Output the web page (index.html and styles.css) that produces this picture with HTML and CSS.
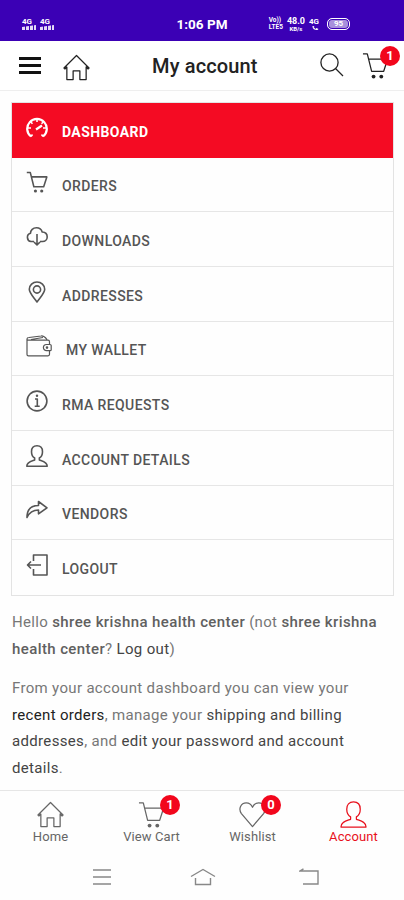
FILE: index.html
```html
<!DOCTYPE html>
<html lang="en">

<head>
    <meta charset="UTF-8">
    <meta name="viewport" content="width=device-width, initial-scale=1.0">
    <title>My account</title>
    <link rel="stylesheet" href="styles.css">
</head>

<body>
    <svg class="sprite" xmlns="http://www.w3.org/2000/svg">
        <symbol id="home" viewBox="0 0 28 28">
            <path d="M1 14.500 14 1.500l13 13-1 1-2-2v13h-6.500v-9h-7v9H4v-13l-2 2z" />
        </symbol>
        <symbol id="cart" viewBox="0 0 28 28">
            <path d="M1 2h4.500l4.500 18h12.500l4-12.500H7" />
            <circle class="dot" cx="12" cy="25.500" r="2" />
            <circle class="dot" cx="20" cy="25.500" r="2" />
        </symbol>
        <symbol id="user" viewBox="0 0 28 28">
            <path d="M14 1C9.500 1 7 4 7 8.500c0 3.500 1.500 6.500 4 8v2.500C7 20.500 1 21.500 1 27h26c0-5.500-6-6.500-10-8v-2.500c2.500-1.500 4-4.500 4-8C21 4 18.500 1 14 1z" />
        </symbol>
    </svg>

    <!-- Status bar -->
    <div class="status-bar">
        <div class="signals">
            <div class="signal"><span>4G</span><i class="bars"></i></div>
            <div class="signal"><span>4G</span><i class="bars"></i></div>
        </div>
        <div class="clock">1:06 PM</div>
        <div class="indicators">
            <div class="tiny"><span>Vo))</span><span>LTE5</span></div>
            <div class="tiny speed"><span>48.0</span><span>KB/s</span></div>
            <div class="tiny call"><span>4G</span>
                <svg viewBox="0 0 8 6"><path d="M1 1c0 3 2 4 5 4l1-1-2-1-1 1-2-2 1-1z" /></svg>
            </div>
            <div class="battery">95</div>
        </div>
    </div>

    <header class="top-bar">
        <div class="menu-button"><span></span><span></span><span></span></div>
        <svg class="icon top-home"><use href="#home" /></svg>
        <h1>My account</h1>
        <svg class="icon top-search" viewBox="0 0 24 24">
            <circle cx="9.500" cy="9.500" r="8.600" />
            <path d="M15.500 15.500 23 23" />
        </svg>
        <div class="icon-badge top-cart">
            <svg class="icon"><use href="#cart" /></svg>
            <span class="badge">1</span>
        </div>
    </header>

    <main>
        <ul class="account-menu">
            <li class="active">
                <svg class="icon" viewBox="0 0 22 22">
                    <path class="thick" d="M5 19.500a9.800 9.800 0 1 1 12 0" />
                    <path d="M11 2v3M4.500 4.800l2 2M17.500 4.800l-2 2M2 11h3M17 11h3M5 19.500l1.500-2M17 19.500l-1.500-2" />
                    <path class="thick" d="m10 12.500 6-4" />
                </svg>
                <span>DASHBOARD</span>
            </li>
            <li><svg class="icon orders"><use href="#cart" /></svg><span>ORDERS</span></li>
            <li>
                <svg class="icon" viewBox="0 0 22 22">
                    <path d="M8 15.500H5a4.200 4.200 0 0 1-.5-8.200C4.500 4 7 1.800 10.500 1.800c3 0 5 1.700 5.700 4.200 3 .2 5 2.200 5 4.900 0 2.600-2 4.600-4.700 4.600H14M11 8v11M8 16l3 3 3-3" />
                </svg>
                <span>DOWNLOADS</span>
            </li>
            <li>
                <svg class="icon" viewBox="0 0 22 22">
                    <path d="M11 21C7 15.500 3.300 12 3.300 8.300a7.700 7.300 0 0 1 15.400 0C18.700 12 15 15.500 11 21z" />
                    <circle cx="11" cy="8.500" r="3.600" />
                </svg>
                <span>ADDRESSES</span>
            </li>
            <li>
                <svg class="icon wallet" viewBox="0 0 26 22">
                    <path d="M23.500 9.300V6.700c0-1-.5-1.500-1.500-1.500H2.500C1.500 5.200 1 4.600 1 4v15.500c0 .8.600 1.300 1.500 1.300H22c1 0 1.500-.5 1.500-1.500v-3.500M1 4c0-1 .8-1.500 2-1.500L15 1c2-.3 4 1 6 3.500M5 4.500l12-2" />
                    <path d="M24 9.500h-3.500a3.100 3.100 0 0 0 0 6.200H24c.7 0 1.200-.4 1.200-1v-4.200c0-.6-.5-1-1.200-1z" />
                    <circle cx="21" cy="12.600" r=".7" />
                </svg>
                <span>MY WALLET</span>
            </li>
            <li>
                <svg class="icon" viewBox="0 0 22 22">
                    <circle cx="11" cy="11" r="9.900" />
                    <path d="M9 9h2.300v7M8.700 16.300h5" />
                    <circle class="dot" cx="11" cy="5.800" r="1.200" />
                </svg>
                <span>RMA REQUESTS</span>
            </li>
            <li><svg class="icon person"><use href="#user" /></svg><span>ACCOUNT DETAILS</span></li>
            <li>
                <svg class="icon" viewBox="0 0 22 22">
                    <path d="M1 18.500C1 11 5 6.500 12.500 6.500V2.500l8.500 6.300-8.500 6V11C7 11 3.500 13 1 18.500z" />
                </svg>
                <span>VENDORS</span>
            </li>
            <li>
                <svg class="icon" viewBox="0 0 22 22">
                    <path d="M7.500 7V1H21v20H7.500v-6M15 11H1.500M5 7.500 1.500 11 5 14.500" />
                </svg>
                <span>LOGOUT</span>
            </li>
        </ul>

        <div class="account-content">
            <p>Hello <strong>shree krishna health center</strong> (not <strong>shree krishna<br>health center</strong>? <a>Log out</a>)</p>
            <p>From your account dashboard you can view your<br><a class="dark">recent orders</a>, manage your <a>shipping and billing<br>addresses</a>, and <a>edit your password and account<br>details</a>.</p>
        </div>
    </main>

    <nav class="bottom-bar">
        <div class="tab">
            <svg class="icon"><use href="#home" /></svg>
            <span>Home</span>
        </div>
        <div class="tab">
            <div class="icon-badge">
                <svg class="icon"><use href="#cart" /></svg>
                <span class="badge">1</span>
            </div>
            <span>View Cart</span>
        </div>
        <div class="tab">
            <div class="icon-badge">
                <svg class="icon" viewBox="0 0 28 28">
                    <path d="M14 26.500 2.500 13C-1 8 2 2 7.500 2c3 0 5.300 1.700 6.500 4.500C15.200 3.700 17.500 2 20.500 2 26 2 29 8 25.500 13z" />
                </svg>
                <span class="badge">0</span>
            </div>
            <span>Wishlist</span>
        </div>
        <div class="tab current">
            <svg class="icon"><use href="#user" /></svg>
            <span>Account</span>
        </div>
    </nav>

    <!-- System navigation -->
    <div class="system-bar">
        <svg viewBox="0 0 20 18"><path d="M1 2h18M1 9h18M1 16h18" /></svg>
        <svg class="sys-home" viewBox="0 0 26 18"><path d="M1 8.500 13 1.500l12 7M5.500 10v6.500h15V10" /></svg>
        <svg viewBox="0 0 20 18"><path d="M4.500 .8 1 3h18v13H4" /></svg>
    </div>
</body>

</html>
```

FILE: styles.css
```css
* {
    box-sizing: border-box;
}

body {
    margin: 0;
    height: 900px;
    display: flex;
    flex-direction: column;
    overflow: hidden;
    background-color: #fefefe;
    color: #777;
    font-family: Roboto, "Liberation Sans", sans-serif;
}

.sprite {
    display: none;
}

.icon {
    display: block;
    flex: none;
    width: 27px;
    height: 27px;
    fill: none;
    stroke: currentColor;
    stroke-width: 1.3;
    stroke-linejoin: round;
}

.dot {
    fill: currentColor;
    stroke: none;
}

/* Status bar */
.status-bar {
    flex: none;
    display: grid;
    grid-template-columns: 1fr auto 1fr;
    align-items: center;
    height: 41px;
    padding: 7px 54px 0 22px;
    background-color: #3b00b5;
    color: #fff;
}

.signals,
.indicators {
    display: flex;
    align-items: center;
}

.signals {
    gap: 4px;
}

.signal {
    width: 14px;
    font-size: 8px;
    font-weight: 700;
    line-height: 7px;
}

.signal span {
    display: block;
}

.bars {
    display: block;
    height: 5px;
    background: repeating-linear-gradient(90deg, #e4daf8 0 3px, transparent 3px 4px);
    clip-path: polygon(0 40%, 100% 0, 100% 100%, 0 100%);
}

.clock {
    margin-left: 32px;
    font-size: 13.500px;
    font-weight: 700;
}

.indicators {
    justify-content: flex-end;
    gap: 4px;
}

.tiny {
    font-size: 6.500px;
    font-weight: 700;
    line-height: 7px;
}

.tiny span {
    display: block;
}

.tiny svg {
    display: block;
    width: 9px;
    height: 6px;
    margin-left: 2px;
    fill: #fff;
}

.speed span:first-child {
    font-size: 9px;
    line-height: 8px;
}

.speed span:last-child {
    font-size: 6px;
    text-align: center;
}

.call {
    width: 14px;
    font-size: 8px;
}

.battery {
    width: 23px;
    height: 12px;
    border: 1px solid #fff;
    border-radius: 5px;
    box-shadow: inset 0 0 0 1px #3b00b5;
    background-color: #a891dc;
    font-size: 8px;
    font-weight: 700;
    line-height: 10px;
    text-align: center;
}

/* Header */
.top-bar {
    flex: none;
    display: flex;
    align-items: center;
    height: 50px;
    padding: 0 15px 0 19px;
    border-bottom: 1px solid #eee;
    background-color: #fff;
    color: #222;
}

.menu-button {
    display: flex;
    flex-direction: column;
    gap: 4px;
    width: 22px;
}

.menu-button span {
    height: 3px;
    background-color: #111;
}

.top-home {
    margin-left: 22px;
    margin-top: 3px;
}

.top-bar h1 {
    flex: 1;
    margin: 0 0 0 62px;
    font-size: 20px;
    font-weight: 500;
    letter-spacing: 0.15px;
    white-space: nowrap;
}

.top-search {
    width: 24px;
    height: 24px;
    margin-top: -2px;
    margin-right: 18px;
}

.top-cart .badge {
    left: 18px;
}

.icon-badge {
    position: relative;
}

.badge {
    position: absolute;
    top: -6px;
    left: 22px;
    width: 20px;
    height: 20px;
    border-radius: 50%;
    background-color: #f2061c;
    color: #fff;
    font-size: 13px;
    font-weight: 700;
    line-height: 20px;
    text-align: center;
}

/* Account menu */
main {
    flex: 1;
    padding: 11px 10px 0 11px;
}

.account-menu {
    margin: 0;
    padding: 0;
    border: 1px solid #e3e3e3;
    list-style: none;
    color: #555;
    font-size: 14px;
    font-weight: 500;
    letter-spacing: 0.4px;
}

.account-menu li {
    display: flex;
    height: 54.660px;
    padding: 13.600px 14px 0;
    border-bottom: 1px solid #e6e6e6;
}

.account-menu li:last-child {
    border-bottom: none;
}

.account-menu .active {
    border-color: #f40b23;
    background-color: #f40b23;
    color: #fff;
    font-weight: 700;
    letter-spacing: 0.4px;
}

.account-menu .icon {
    width: 22px;
    height: 22px;
    stroke-width: 1.6;
}

.account-menu .orders,
.account-menu .person {
    stroke-width: 2;
}

.account-menu span {
    margin: 5px 0 0 14px;
    line-height: 20px;
}

.account-menu .wallet {
    width: 26px;
    stroke-width: 1.2;
}

.thick {
    stroke-width: 2.2;
}

.account-content {
    padding: 13px 1px 0;
    font-size: 15px;
    line-height: 26.600px;
    letter-spacing: 0.33px;
    white-space: nowrap;
}

.account-content p {
    margin: 0 0 13px;
}

.account-content p:last-child {
    margin-bottom: 0;
}

.account-content strong {
    color: #606060;
    font-weight: 500;
    letter-spacing: 0.4px;
}

.account-content a {
    color: #444;
}

.account-content .dark {
    color: #222;
}

/* Bottom navigation */
.bottom-bar {
    flex: none;
    display: flex;
    height: 64px;
    padding-top: 10px;
    border-top: 1px solid #e6e6e6;
}

.tab {
    flex: 1;
    display: flex;
    flex-direction: column;
    align-items: center;
    color: #666;
    font-size: 13px;
    line-height: 18px;
    letter-spacing: 0.1px;
}

.current {
    color: #e8101c;
}

.system-bar {
    flex: none;
    display: flex;
    justify-content: space-between;
    height: 46px;
    padding: 14px 85px 0 92px;
}

.system-bar svg {
    width: 20px;
    height: 18px;
    fill: none;
    stroke: #888;
    stroke-width: 1.4;
}

.system-bar .sys-home {
    width: 26px;
    margin-right: 6px;
}
```
